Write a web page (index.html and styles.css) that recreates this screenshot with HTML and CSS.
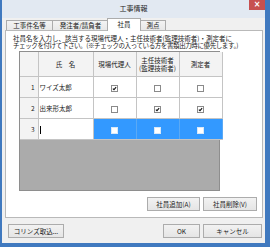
FILE: index.html
```html
<!DOCTYPE html>
<html lang="ja">
  <head>
    <meta charset="UTF-8" />
    <title>工事情報</title>
    <link rel="stylesheet" href="styles.css">
  </head>
  <body>
    <div class="window">
      <div class="titlebar">
        <span class="title">工事情報</span>
        <span class="close">×</span>
      </div>
      <div class="content">
        <div class="tabs">
          <div class="tab t1">工事件名等</div>
          <div class="tab t2">発注者/請負者</div>
          <div class="tab t3 active">社員</div>
          <div class="tab t4">測点</div>
        </div>
        <div class="panel">
          <p class="note">
            <span class="l1">社員名を入力し、該当する現場代理人・主任技術者(監理技術者)・測定者に</span>
            <span class="l2">チェックを付けて下さい。(※チェックの入っている方を書類出力時に優先します。)</span>
          </p>
          <div class="grid">
            <table>
              <tr class="head">
                <th class="rh"></th>
                <th class="c-name">氏　名</th>
                <th class="c-chk">現場代理人</th>
                <th class="c-chk"><span class="hl">主任技術者</span><span class="hl">(監理技術者)</span></th>
                <th class="c-chk">測定者</th>
              </tr>
              <tr>
                <td class="rh">1</td>
                <td class="name">ワイズ太郎</td>
                <td class="box"><span class="check on"><svg viewBox="0 0 7 7"><path d="M1.2 3.6 L2.8 5.2 L5.8 1.6" /></svg></span></td>
                <td class="box"><span class="check"></span></td>
                <td class="box"><span class="check"></span></td>
              </tr>
              <tr>
                <td class="rh">2</td>
                <td class="name">出来形太郎</td>
                <td class="box"><span class="check"></span></td>
                <td class="box"><span class="check on"><svg viewBox="0 0 7 7"><path d="M1.2 3.6 L2.8 5.2 L5.8 1.6" /></svg></span></td>
                <td class="box"><span class="check on"><svg viewBox="0 0 7 7"><path d="M1.2 3.6 L2.8 5.2 L5.8 1.6" /></svg></span></td>
              </tr>
              <tr class="current">
                <td class="rh">3</td>
                <td class="name"><span class="caret"></span></td>
                <td class="box sel"><span class="check"></span></td>
                <td class="box sel"><span class="check"></span></td>
                <td class="box sel"><span class="check"></span></td>
              </tr>
            </table>
          </div>
          <div class="panel-buttons">
            <button class="btn w-add">社員追加(A)</button>
            <button class="btn w-del">社員削除(V)</button>
          </div>
        </div>
        <div class="footer">
          <button class="btn w-corins">コリンズ取込...</button>
          <span class="spacer"></span>
          <button class="btn w-ok">OK</button>
          <button class="btn w-cancel">キャンセル</button>
        </div>
      </div>
    </div>
  </body>
</html>
```

FILE: styles.css
```css
html,
body,
p {
  margin: 0px;
  padding: 0px;
}
body {
  width: 270px;
  height: 247px;
  overflow: hidden;
  background-color: #4079bf;
  font-family: "Noto Sans CJK JP", sans-serif;
  font-size: 6.5px;
  color: #1a1a1a;
}
.window {
  display: flex;
  flex-direction: column;
  height: 243px;
  margin: 0 5px 0 2px;
}
.titlebar {
  display: flex;
  align-items: flex-start;
  height: 18px;
  background-color: #e2e9f2;
  padding-left: 16px;
}
.title {
  flex: 1;
  text-align: center;
  line-height: 17px;
  font-size: 7px;
  color: #222;
}
.close {
  width: 16px;
  height: 10px;
  line-height: 9px;
  text-align: center;
  background-color: #c75050;
  color: #fff;
  font-family: "DejaVu Sans", sans-serif;
  font-size: 8px;
  font-weight: bold;
}
.content {
  flex: 1;
  display: flex;
  flex-direction: column;
  background-color: #f0f0f0;
  padding: 0 2px 0 3px;
}
.tabs {
  display: flex;
  align-items: flex-end;
  height: 12px;
  padding-left: 1px;
}
.tab {
  box-sizing: border-box;
  height: 10px;
  line-height: 9px;
  text-align: center;
  border: 1px solid #acacac;
  border-bottom: none;
  margin-right: -1px;
  background: linear-gradient(#f3f3f3, #e8e8e8);
}
.tab.active {
  position: relative;
  height: 13px;
  margin-bottom: -1px;
  margin-left: -1px;
  background: #fff;
  line-height: 11px;
}
.t1 {
  width: 47px;
}
.t2 {
  width: 57px;
}
.t3 {
  width: 34px;
}
.t4 {
  width: 26px;
}
.panel {
  box-sizing: border-box;
  height: 188px;
  width: 258px;
  background-color: #fff;
  border: 1px solid #b9b9b9;
  padding: 4px 0 0 7px;
}
.note {
  display: flex;
  flex-direction: column;
  white-space: nowrap;
}
.note span {
  display: block;
  height: 7px;
  line-height: 7px;
}
.l2 {
  letter-spacing: -0.4px;
}
.grid {
  box-sizing: border-box;
  width: 201px;
  height: 140px;
  margin: 2px 0 0 6px;
  border: 1px solid #8e8e8e;
  background-color: #ababab;
}
.grid table {
  border-collapse: collapse;
  table-layout: fixed;
  width: 200px;
}
.grid th,
.grid td {
  padding: 0;
  border-right: 1px solid #c4c4c4;
  border-bottom: 1px solid #c4c4c4;
  font-weight: normal;
  white-space: nowrap;
}
.grid .head th {
  height: 24px;
  background-color: #f3f3f3;
  line-height: 8px;
  text-align: center;
}
.hl {
  display: block;
  height: 8px;
}
.grid .rh {
  width: 18px;
  background-color: #f3f3f3;
  text-align: right;
  padding-right: 3px;
  box-sizing: border-box;
}
.c-name {
  width: 54px;
}
.c-chk {
  width: 42px;
}
.grid td {
  height: 20px;
  background-color: #fff;
}
.grid .name {
  padding-left: 1px;
}
.grid .box {
  text-align: center;
}
.grid .sel {
  background-color: #3399ff;
  border-right-color: #5aa9f5;
}
.check {
  display: inline-block;
  box-sizing: border-box;
  width: 7px;
  height: 7px;
  border: 1px solid #8a8a8a;
  background-color: #fff;
  vertical-align: middle;
}
.sel .check {
  border-color: #d8e8f8;
}
.check svg {
  display: block;
  width: 5px;
  height: 5px;
  fill: none;
  stroke: #111;
  stroke-width: 1.5;
}
.caret {
  display: inline-block;
  width: 1px;
  height: 8px;
  background-color: #000;
  vertical-align: middle;
}
.panel-buttons {
  display: flex;
  justify-content: flex-end;
  gap: 3px;
  margin: 6px 5px 0 0;
}
.btn {
  box-sizing: border-box;
  height: 14px;
  padding: 0;
  border: 1px solid #acacac;
  background: linear-gradient(#f2f2f2, #e5e5e5);
  font-family: "Noto Sans CJK JP", sans-serif;
  font-size: 6.5px;
  color: #1a1a1a;
  line-height: 12px;
}
.w-add {
  width: 53px;
}
.w-del {
  width: 54px;
}
.footer {
  display: flex;
  gap: 3px;
  margin: 6px 1px 0 3px;
}
.spacer {
  flex: 1;
}
.w-corins {
  width: 56px;
}
.w-ok {
  width: 37px;
}
.w-cancel {
  width: 59px;
}
```
